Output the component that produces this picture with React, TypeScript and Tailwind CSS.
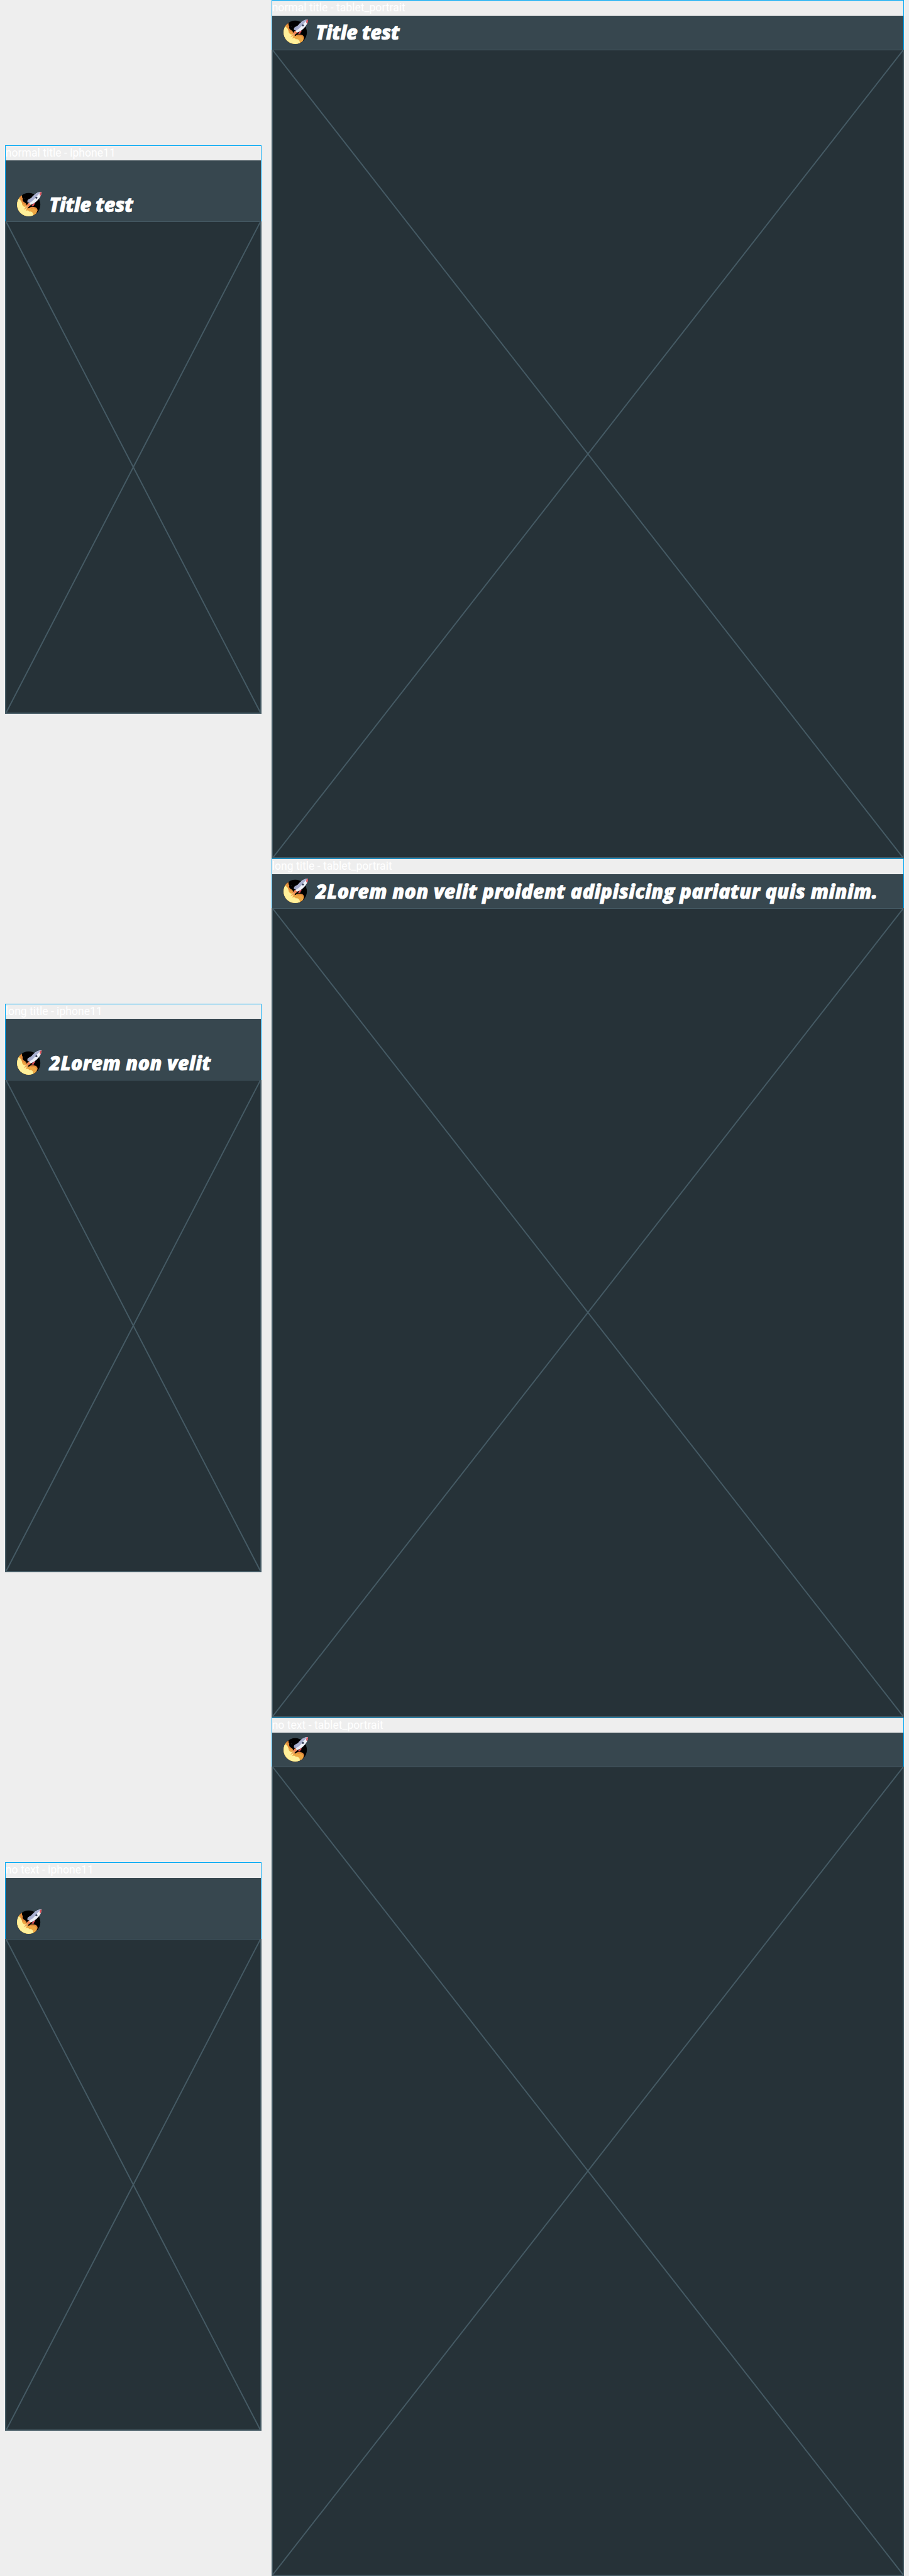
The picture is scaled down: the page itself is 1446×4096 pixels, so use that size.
function Rocket() {
  return (
    <svg viewBox="0 0 40 40" className="block h-[39.24px] w-[39.24px] shrink-0">
      <defs>
        <clipPath id="moon">
          <circle cx="19" cy="20.8" r="18.9" />
        </clipPath>
      </defs>
      <circle cx="19" cy="20.8" r="18.9" fill="#000" />
      <g clipPath="url(#moon)">
        <path d="M8.5 3Q7 8 9.5 11Q8 15 12 17Q15 18 16 22L19 27Q22 23 27 24.500Q33 25 33.500 30L31 36L18 42L-2 38L-2 6Z" fill="#e08a3c" />
        <path d="M5 6Q4 12 7.500 15Q8 20 13 20L17 28Q20 25 24 27.500Q29 25 31.500 30Q33 34 29 37L18 42L-2 38L-2 8Z" fill="#eda743" />
        <path d="M2 11Q6 13 8 18Q8 23 13 24.500L19 21L14 31Q18 29 20 32Q24 31 26 35L27 40L18 42L-2 38L-2 10Z" fill="#fff09a" />
      </g>
      <circle cx="13" cy="11" r=".4" fill="#777" />
      <path d="M11 29L18.500 18L23 21L17 26Z" fill="#f0a85c" />
      <path d="M16 23L19.500 18L22.500 20.500L19 24Z" fill="#f07f5c" />
      <path d="M17 17Q16 13 20 11.500L25 9L27 15L21 18Z" fill="#9fa7c6" />
      <path d="M24 22L29 16.500L29 20Q27 21.500 27 23.500L23.500 23Z" fill="#dc5058" />
      <path d="M20 20Q21 11 29 4Q34 0 40 0Q40 6 35 12Q30 18 23 21Z" fill="#eef0f8" />
      <path d="M19.500 18Q21 10 29 4Q34 0 39 0L34 5Q31 8 29 11Q25 16 20 18Z" fill="#a9b0d0" />
      <path d="M37.500 1L40 0Q40 4 38 6.500Q36 5 37.500 1Z" fill="#dc5058" />
      <circle cx="31.500" cy="9.500" r="1.600" fill="#343d55" />
    </svg>
  );
}

type DeviceProps = { label: string; title: string; phone?: boolean };

function Device({ label, title, phone = false }: DeviceProps) {
  return (
    <section className={phone ? "flex h-[904.33px] w-[408.1px] flex-col" : "flex h-[1365.33px] w-[1006.5px] flex-col"}>
      <div className="shrink-0 border-x border-t border-[#03a9f4]">
        <div className="h-[23.54px] overflow-hidden whitespace-nowrap font-['Roboto'] text-[17.6px] leading-[22px] text-white">
          {label}
        </div>
        <div
          className={
            phone
              ? "flex h-[97.1px] items-end bg-[#37474f] pb-[8px] pl-[18.6px]"
              : "flex h-[54px] items-end bg-[#37474f] pb-[8px] pl-[18.6px]"
          }
        >
          <Rocket />
          <h1
            className={
              title === "Title test"
                ? "ml-[11.5px] h-[39.24px] whitespace-nowrap font-['Open_Sans'] text-[31px] leading-[41px] font-extrabold tracking-[-0.6px] text-white italic [-webkit-text-stroke:0.6px_white]"
                : "ml-[11.5px] h-[39.24px] whitespace-nowrap font-['Open_Sans'] text-[31px] leading-[41px] font-extrabold tracking-[0.08px] text-white italic [-webkit-text-stroke:0.6px_white]"
            }
          >
            {title}
          </h1>
        </div>
      </div>
      <div className="min-h-0 flex-1 border-2 border-t border-[#455a64] bg-[#263238]">
        <svg className="block h-full w-full" viewBox="0 0 100 100" preserveAspectRatio="none">
          <path d="M0 0L100 100M100 0L0 100" stroke="#455a64" strokeWidth="2" vectorEffect="non-scaling-stroke" />
        </svg>
      </div>
    </section>
  );
}

const rows = [
  { name: "normal title", title: "Title test", phoneTitle: "Title test" },
  {
    name: "long title",
    title: "2Lorem non velit proident adipisicing pariatur quis minim.",
    phoneTitle: "2Lorem non velit",
  },
  { name: "no text", title: "", phoneTitle: "" },
];

export default function App() {
  return (
    <main className="w-[1446px] bg-[#eeeeee]">
      {rows.map((row) => (
        <div key={row.name} className="flex h-[1365.33px] items-center gap-[15.7px] px-[7.85px]">
          <Device phone label={`${row.name} - iphone11`} title={row.phoneTitle} />
          <Device label={`${row.name} - tablet_portrait`} title={row.title} />
        </div>
      ))}
    </main>
  );
}
